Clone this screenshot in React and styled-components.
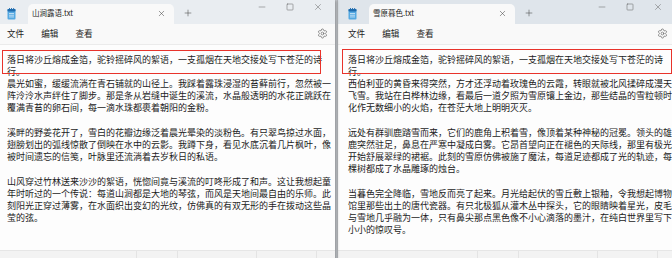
import React from 'react'
import styled, { createGlobalStyle } from 'styled-components'
import { X, Plus, Minus, Square, Settings } from 'lucide-react'

const GlobalStyle = createGlobalStyle`
    html, body {
        margin: 0;
        padding: 0;
        background: #cfd3d8;
        overflow: hidden;
    }
    * {
        box-sizing: border-box;
    }
`

const firstLine = '落日将沙丘熔成金箔，驼铃摇碎风的絮语，一支孤烟在天地交接处写下苍茫的诗行。'

const notes = [
    {
        title: '山涧露语.txt',
        active: false,
        boxTop: 5,
        boxLeft: 5,
        boxWidth: 319,
        boxHeight: 24,
        paragraphs: [
            '晨光如蜜，缓缓流淌在青石铺就的山径上。我踩着露珠浸湿的苔藓前行，忽然被一阵泠泠水声绊住了脚步。那是条从岩缝中诞生的溪流，水晶般透明的水花正跳跃在覆满青苔的卵石间，每一滴水珠都裹着朝阳的金粉。',
            '溪畔的野姜花开了，雪白的花瓣边缘泛着晨光晕染的淡粉色。有只翠鸟掠过水面，翅膀划出的弧线惊散了倒映在水中的云影。我蹲下身，看见水底沉着几片枫叶，像被时间遗忘的信笺，叶脉里还流淌着去岁秋日的私语。',
            '山风穿过竹林送来沙沙的絮语，恍惚间竟与溪流的叮咚形成了和声。这让我想起童年时听过的一个传说：每道山涧都是大地的琴弦，而风是天地间最自由的乐师。此刻阳光正穿过薄雾，在水面织出变幻的光纹，仿佛真的有双无形的手在拨动这些晶莹的弦。',
        ],
    },
    {
        title: '雪原暮色.txt',
        active: true,
        boxTop: 4,
        boxLeft: 4,
        boxWidth: 330,
        boxHeight: 25,
        paragraphs: [
            '西伯利亚的黄昏来得突然，方才还浮动着玫瑰色的云霞，转眼就被北风揉碎成漫天飞雪。我站在白桦林边缘，看最后一道夕照为雪原镶上金边，那些结晶的雪粒顿时化作无数细小的火焰，在苍茫大地上明明灭灭。',
            '远处有群驯鹿踏雪而来，它们的鹿角上积着雪，像顶着某种神秘的冠冕。领头的雄鹿突然驻足，鼻息在严寒中凝成白雾。它昂首望向正在褪色的天际线，那里有极光开始舒展翠绿的裙裾。此刻的雪原仿佛被施了魔法，每道足迹都成了光的轨迹，每棵树都成了水晶雕琢的烛台。',
            '当暮色完全降临，雪地反而亮了起来。月光给起伏的雪丘敷上银釉，令我想起博物馆里那些出土的唐代瓷器。有只北极狐从灌木丛中探头，它的眼睛映着星光，皮毛与雪地几乎融为一体，只有鼻尖那点黑色像不小心滴落的墨汁，在纯白世界里写下小小的惊叹号。',
        ],
    },
]

function NotepadIcon() {
    return (
        <svg width="9" height="12" viewBox="0 0 9 12">
            <rect x="0.5" y="1" width="8" height="10.5" rx="1" fill="#55a9e2" />
            <rect x="0.5" y="1" width="8" height="2.6" rx="0.8" fill="#1f6cae" />
            <rect x="2" y="0" width="0.9" height="2.4" fill="#1f6cae" />
            <rect x="4.1" y="0" width="0.9" height="2.4" fill="#1f6cae" />
            <rect x="6.2" y="0" width="0.9" height="2.4" fill="#1f6cae" />
            <rect x="2" y="5" width="5" height="0.7" fill="#e8f4fc" />
            <rect x="2" y="6.8" width="5" height="0.7" fill="#e8f4fc" />
            <rect x="2" y="8.6" width="5" height="0.7" fill="#e8f4fc" />
        </svg>
    )
}

function NoteWindow({ note, first }) {
    return (
        <Window $first={first}>
            <TitleBar $active={note.active}>
                <AppIcon>
                    <NotepadIcon />
                </AppIcon>
                <Tab>
                    <span>{note.title}</span>
                    <X size={9} strokeWidth={1.4} color="#444" />
                </Tab>
                <NewTab>
                    <Plus size={10} strokeWidth={1.3} color="#444" />
                </NewTab>
                <Controls>
                    <ControlButton>
                        <Minus size={10} strokeWidth={1.1} color="#555" />
                    </ControlButton>
                    <ControlButton>
                        <Square size={8} strokeWidth={1.4} color="#555" />
                    </ControlButton>
                    <ControlButton>
                        <X size={10} strokeWidth={1.1} color="#555" />
                    </ControlButton>
                </Controls>
            </TitleBar>

            <MenuBar>
                <MenuItem>文件</MenuItem>
                <MenuItem>编辑</MenuItem>
                <MenuItem>查看</MenuItem>
                <Gear>
                    <Settings size={11} strokeWidth={1.3} color="#555" />
                </Gear>
            </MenuBar>

            <Editor>
                <Highlight
                    style={{
                        top: note.boxTop,
                        left: note.boxLeft,
                        width: note.boxWidth,
                        height: note.boxHeight,
                    }}
                />
                <Line>{firstLine}</Line>
                {note.paragraphs.map((p, i) => (
                    <Para key={i} $first={i === 0}>{p}</Para>
                ))}
            </Editor>

            <StatusBar>
                <StatusCell $w={140} />
                <StatusCell $w={41} />
                <StatusCell $w={79} />
                <StatusCell $w={60} />
            </StatusBar>
        </Window>
    )
}

export default function App() {
    return (
        <>
            <GlobalStyle />
            <Desktop>
                {notes.map((n, i) => (
                    <NoteWindow key={n.title} note={n} first={i === 0} />
                ))}
            </Desktop>
        </>
    )
}

const Desktop = styled.div`
    width: 672px;
    height: 258px;
    overflow: hidden;
    display: flex;
    gap: 2px;
`

const Window = styled.div`
    flex: 0 0 338px;
    width: 338px;
    height: 272px;
    display: flex;
    flex-direction: column;
    background: #ffffff;
    margin-left: ${(p) => (p.$first ? '-3px' : '0')};
    border-left: ${(p) => (p.$first ? 'none' : '1px solid #b9bcc0')};
    box-shadow: ${(p) => (p.$first ? '2px 0 3px rgba(0, 0, 0, 0.28)' : 'none')};
    position: relative;
    z-index: ${(p) => (p.$first ? 2 : 1)};
    font-family: "Noto Sans CJK SC", "Noto Sans", sans-serif;
    color: #1b1b1b;
`

const TitleBar = styled.div`
    height: 24px;
    flex: 0 0 24px;
    display: flex;
    align-items: flex-end;
    background: ${(p) => (p.$active ? '#dfe5eb' : '#e9edf1')};
    position: relative;
`

const AppIcon = styled.div`
    width: 31px;
    height: 20px;
    display: flex;
    align-items: center;
    padding-left: 10px;
    padding-bottom: 1px;
`

const Tab = styled.div`
    width: 146px;
    height: 20px;
    background: #f9f9f9;
    border-radius: 5px 5px 0 0;
    display: flex;
    align-items: center;
    justify-content: space-between;
    padding: 0 8px 2px 4px;
    font-size: 7.5px;
    color: #222;

    span {
        line-height: 1;
    }
`

const NewTab = styled.div`
    width: 28px;
    height: 20px;
    display: flex;
    align-items: center;
    justify-content: center;
    padding-bottom: 2px;
`

const Controls = styled.div`
    margin-left: auto;
    align-self: flex-start;
    display: flex;
    height: 14px;
    padding-right: 3px;
`

const ControlButton = styled.div`
    width: 28px;
    height: 14px;
    display: flex;
    align-items: center;
    justify-content: center;
`

const MenuBar = styled.div`
    height: 21px;
    flex: 0 0 21px;
    background: #f9f9f9;
    border-bottom: 1px solid #ebebeb;
    display: flex;
    align-items: center;
    gap: 17px;
    padding: 0 0 1px 10px;
`

const MenuItem = styled.div`
    font-size: 8.6px;
    line-height: 1;
    color: #1e1e1e;
`

const Gear = styled.div`
    margin-left: auto;
    width: 22px;
    display: flex;
    justify-content: center;
    padding-right: 4px;
`

const Editor = styled.div`
    height: 205px;
    flex: 0 0 205px;
    position: relative;
    background: #fdfdfd;
    padding: 9px 2px 0 10px;
    font-size: 9px;
    line-height: 11.9px;
    overflow: hidden;
`

const Highlight = styled.div`
    position: absolute;
    border: 1.5px solid #e8332b;
    pointer-events: none;
`

const Line = styled.div`
    width: 326px;
`

const Para = styled.div`
    width: 326px;
    margin-top: ${(p) => (p.$first ? '0' : '13.4px')};
`

const StatusBar = styled.div`
    flex: 1;
    background: #f3f3f3;
    border-top: 1px solid #e6e6e6;
    display: flex;
`

const StatusCell = styled.div`
    width: ${(p) => p.$w}px;
    border-right: 1px solid #e4e4e4;
`
